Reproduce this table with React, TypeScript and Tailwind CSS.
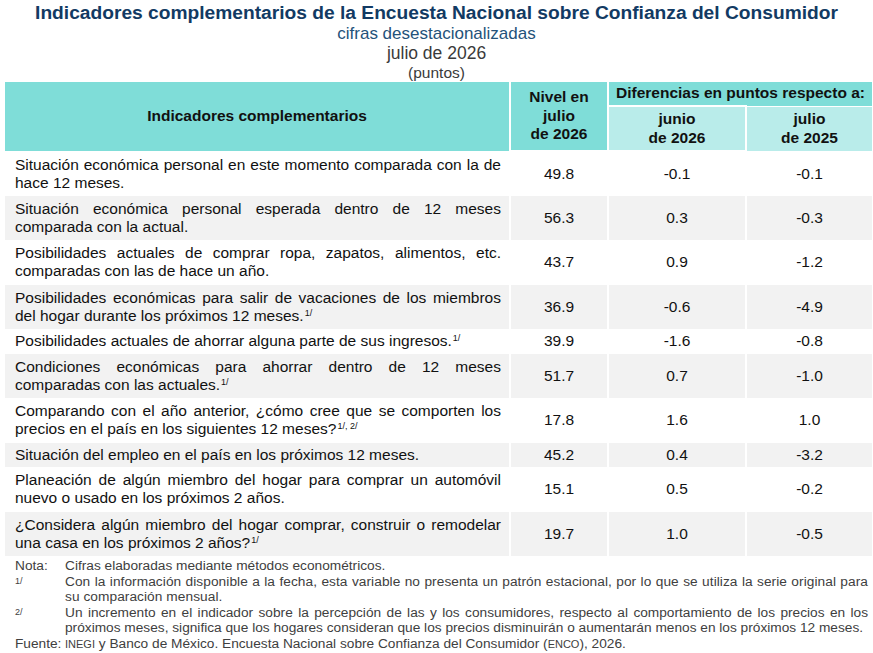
import React from "react";

type Row = {
  text: React.ReactNode;
  nivel: string;
  junio: string;
  julio: string;
  lines: 1 | 2;
};

const Sup = ({ children }: { children: React.ReactNode }) => (
  <span className="text-[9px] leading-none align-[5px] ml-[1px]">{children}</span>
);

const ROWS: Row[] = [
  { text: "Situación económica personal en este momento comparada con la de hace 12 meses.", nivel: "49.8", junio: "-0.1", julio: "-0.1", lines: 2 },
  { text: "Situación económica personal esperada dentro de 12 meses comparada con la actual.", nivel: "56.3", junio: "0.3", julio: "-0.3", lines: 2 },
  { text: "Posibilidades actuales de comprar ropa, zapatos, alimentos, etc. comparadas con las de hace un año.", nivel: "43.7", junio: "0.9", julio: "-1.2", lines: 2 },
  { text: <>Posibilidades económicas para salir de vacaciones de los miembros del hogar durante los próximos 12 meses.<Sup>1/</Sup></>, nivel: "36.9", junio: "-0.6", julio: "-4.9", lines: 2 },
  { text: <>Posibilidades actuales de ahorrar alguna parte de sus ingresos.<Sup>1/</Sup></>, nivel: "39.9", junio: "-1.6", julio: "-0.8", lines: 1 },
  { text: <>Condiciones económicas para ahorrar dentro de 12 meses comparadas con las actuales.<Sup>1/</Sup></>, nivel: "51.7", junio: "0.7", julio: "-1.0", lines: 2 },
  { text: <>Comparando con el año anterior, ¿cómo cree que se comporten los precios en el país en los siguientes 12 meses?<Sup>1/, 2/</Sup></>, nivel: "17.8", junio: "1.6", julio: "1.0", lines: 2 },
  { text: "Situación del empleo en el país en los próximos 12 meses.", nivel: "45.2", junio: "0.4", julio: "-3.2", lines: 1 },
  { text: "Planeación de algún miembro del hogar para comprar un automóvil nuevo o usado en los próximos 2 años.", nivel: "15.1", junio: "0.5", julio: "-0.2", lines: 2 },
  { text: <>¿Considera algún miembro del hogar comprar, construir o remodelar una casa en los próximos 2 años?<Sup>1/</Sup></>, nivel: "19.7", junio: "1.0", julio: "-0.5", lines: 2 },
];

export default function App() {
  return (
    <div className="w-[873px] h-[653px] bg-white overflow-hidden font-['Liberation_Sans',Arial,sans-serif]">
      <div className="text-center">
        <div className="mt-[2px] h-[22px] leading-[22px] text-[19.2px] font-bold text-[#123a63]">
          Indicadores complementarios de la Encuesta Nacional sobre Confianza del Consumidor
        </div>
        <div className="h-[19px] leading-[19px] text-[17px] text-[#24527a]">cifras desestacionalizadas</div>
        <div className="h-[20px] leading-[20px] text-[17.5px] text-[#3a3a3a]">julio de 2026</div>
        <div className="h-[19px] leading-[19px] text-[15.5px] text-[#3a3a3a]">(puntos)</div>
      </div>

      <table className="ml-[5px] w-[867px] table-fixed border-collapse text-[#111]">
        <colgroup>
          <col className="w-[505px]" />
          <col className="w-[98px]" />
          <col className="w-[138px]" />
          <col className="w-[126px]" />
        </colgroup>
        <thead className="text-[15.5px] font-bold leading-[18.5px]">
          <tr className="h-[24px]">
            <th rowSpan={2} className="bg-[#7fddd8] border border-white border-t-0 border-l-0 text-center">
              Indicadores complementarios
            </th>
            <th rowSpan={2} className="bg-[#7fddd8] border-2 border-white border-t-0 text-center">
              Nivel en
              <br />
              julio
              <br />
              de 2026
            </th>
            <th colSpan={2} className="bg-[#7fddd8] border border-white border-t-0 border-r-0 text-center">
              Diferencias en puntos respecto a:
            </th>
          </tr>
          <tr className="h-[45px]">
            <th className="bg-[#b9ecea] border-2 border-white text-center">
              junio
              <br />
              de 2026
            </th>
            <th className="bg-[#b9ecea] border border-white border-r-0 text-center">
              julio
              <br />
              de 2025
            </th>
          </tr>
        </thead>
        <tbody className="text-[15.5px] leading-[18px]">
          {ROWS.map((r, i) => (
            <tr
              key={i}
              className={(r.lines === 2 ? "h-[44.5px] " : "h-[24.5px] ") + (i % 2 === 1 ? "bg-[#f2f2f2]" : "bg-white")}
            >
              <td className="border-r-2 border-white pl-[10px] pr-[8px] text-justify align-middle">{r.text}</td>
              <td className="border-r-2 border-white text-center align-middle">{r.nivel}</td>
              <td className="border-r-2 border-white text-center align-middle">{r.junio}</td>
              <td className="text-center align-middle">{r.julio}</td>
            </tr>
          ))}
        </tbody>
      </table>

      <div className="pl-[15px] pr-[5px] pt-[2px] grid grid-cols-[50px_1fr] text-[13.7px] leading-[15.6px] text-[#404040]">
        <div>Nota:</div>
        <div>Cifras elaboradas mediante métodos econométricos.</div>
        <div className="text-[9px] leading-[14px]">1/</div>
        <div className="text-justify tracking-[0.06px]">
          Con la información disponible a la fecha, esta variable no presenta un patrón estacional, por lo que se utiliza la serie original para su comparación mensual.
        </div>
        <div className="text-[9px] leading-[14px]">2/</div>
        <div className="text-justify">
          Un incremento en el indicador sobre la percepción de las y los consumidores, respecto al comportamiento de los precios en los próximos meses, significa que los hogares consideran que los precios disminuirán o aumentarán menos en los próximos 12 meses.
        </div>
        <div>Fuente:</div>
        <div>
          <span className="text-[11px]">INEGI</span> y Banco de México. Encuesta Nacional sobre Confianza del Consumidor (<span className="text-[11px]">ENCO</span>), 2026.
        </div>
      </div>
    </div>
  );
}
